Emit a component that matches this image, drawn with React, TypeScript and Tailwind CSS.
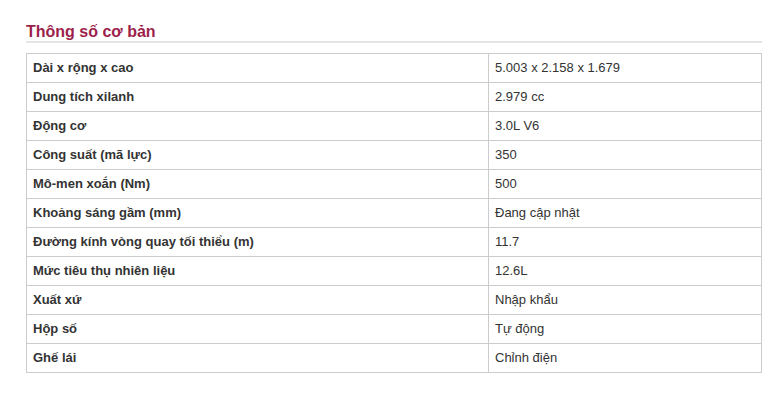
import React from "react";

const rows: [string, string][] = [
  ["Dài x rộng x cao", "5.003 x 2.158 x 1.679"],
  ["Dung tích xilanh", "2.979 cc"],
  ["Động cơ", "3.0L V6"],
  ["Công suất (mã lực)", "350"],
  ["Mô-men xoắn (Nm)", "500"],
  ["Khoảng sáng gầm (mm)", "Đang cập nhật"],
  ["Đường kính vòng quay tối thiểu (m)", "11.7"],
  ["Mức tiêu thụ nhiên liệu", "12.6L"],
  ["Xuất xứ", "Nhập khẩu"],
  ["Hộp số", "Tự động"],
  ["Ghế lái", "Chỉnh điện"],
];

export default function App() {
  return (
    <div
      className="w-[784px] h-[400px] overflow-hidden bg-white pl-[26px] pr-[22px] pt-[23px]"
      style={{ fontFamily: '"Liberation Sans", Arial, sans-serif' }}
    >
      <h2 className="text-[16px] leading-[18px] font-bold text-[#9c1f4b] border-b-2 border-[#e5e5e5]">
        Thông số cơ bản
      </h2>
      <table className="mt-[10px] w-[736px] border-collapse text-[13px] text-[#333]">
        <tbody>
          {rows.map(([k, v]) => (
            <tr key={k} className="h-[29px]">
              <td className="w-[462px] border border-[#ccc] px-[6px] py-0 font-bold align-middle">{k}</td>
              <td className="border border-[#ccc] px-[6px] py-0 align-middle">{v}</td>
            </tr>
          ))}
        </tbody>
      </table>
      <h2 className="mt-[25px] text-[16px] leading-[18px] font-bold text-[#9c1f4b]">Tiện nghi</h2>
    </div>
  );
}
